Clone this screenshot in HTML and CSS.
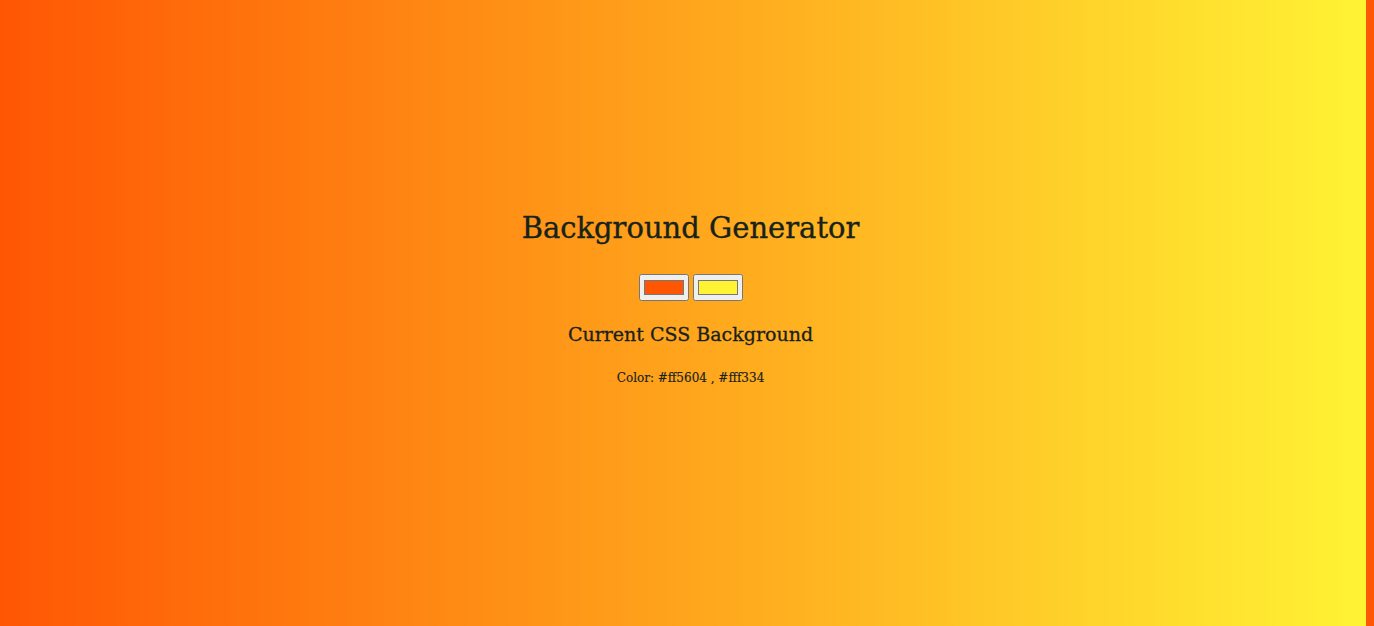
FILE: index.html
```html
<!DOCTYPE html>
<html>
<head>
<meta charset="utf-8">
<title>Background Generator</title>
<link rel="stylesheet" href="styles.css">
</head>
<body>
<main class="generator">
  <h1 class="title">Background Generator</h1>
  <div class="pickers">
    <input class="picker" type="color" value="#ff5604">
    <input class="picker" type="color" value="#fff334">
  </div>
  <h3 class="subtitle">Current CSS Background</h3>
  <p class="value">Color: #ff5604 , #fff334</p>
</main>
</body>
</html>
```
FILE: styles.css
```css
html {
  background: linear-gradient(to right, #ff5604, #fff334) 0 0 / 1366px 100% repeat-x;
  height: 100%;
}
body {
  margin: 0;
  height: 100%;
  font-family: "DejaVu Serif", serif;
  color: #17221b;
  text-align: center;
}
.generator {
  padding: 205px 0 0 7px;
}
.title {
  margin: 0;
  font-size: 29px;
  font-weight: normal;
  line-height: 46px;
  -webkit-text-stroke: 0.35px #17221b;
}
.pickers {
  margin-top: 23px;
  display: flex;
  justify-content: center;
  gap: 4px;
}
.picker {
  margin: 0;
}
.subtitle {
  margin: 18px 0 0;
  font-size: 19px;
  font-weight: normal;
  line-height: 30px;
  -webkit-text-stroke: 0.3px #17221b;
}
.value {
  margin: 19px 0 0;
  font-size: 12px;
  line-height: 20px;
  -webkit-text-stroke: 0.15px #17221b;
}
```
